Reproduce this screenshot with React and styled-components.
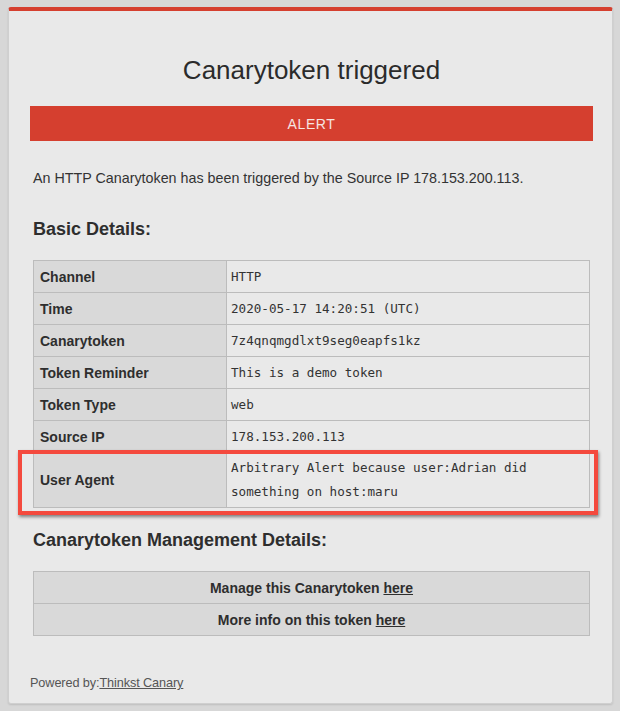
import React from 'react'
import styled, { createGlobalStyle } from 'styled-components'

// Style
const GlobalStyle = createGlobalStyle`
  html, body {
    margin: 0;
    background: #d7d7d7;
  }
  body {
    padding: 7px 7px 8px 8px;
    font-family: "Liberation Sans", Arial, Helvetica, sans-serif;
    color: #333;
  }
`
const Card = styled.div`
  background: #e9e9e9;
  border: 1px solid #cfcfcf;
  border-top: 4px solid #d53f2f;
  border-radius: 3px;
  box-shadow: 0 1px 2px rgba(0, 0, 0, 0.12);
  padding: 0 19px 12px 21px;
`
const Title = styled.h1`
  margin: 44px 0 0;
  text-align: center;
  font-size: 26px;
  font-weight: normal;
  line-height: 30px;
  color: #2b2b2b;
`
const AlertBar = styled.div`
  margin-top: 21px;
  height: 35px;
  background: #d53f2f;
  color: #f6e4e1;
  font-size: 14px;
  letter-spacing: 0.6px;
  display: flex;
  align-items: center;
  justify-content: center;
`
const Section = styled.div`
  padding: 0 3px 0 3px;
`
const Intro = styled.p`
  margin: 28px 0 0;
  font-size: 14.3px;
  line-height: 18px;
`
const Heading = styled.h2`
  margin: ${(p) => p.$top}px 0 0;
  font-size: 18px;
  font-weight: bold;
  line-height: 22px;
  color: #2e2e2e;
`
const Table = styled.table`
  width: 100%;
  margin-top: ${(p) => p.$top}px;
  border-collapse: collapse;
  font-size: 14px;
`
const Row = styled.tr`
  height: ${(p) => (p.$tall ? 53 : 32)}px;
`
const Label = styled.td`
  width: 180px;
  padding: 0 6px;
  background: #d9d9d9;
  border: 1px solid #bcbcbc;
  font-weight: bold;
  color: #2e2e2e;
`
const Value = styled.td`
  padding: 3px 4px;
  border: 1px solid #bcbcbc;
  font-family: "DejaVu Sans Mono", "Liberation Mono", monospace;
  font-size: 12.6px;
  line-height: 24px;
  color: #333;
`
const ManageCell = styled.td`
  padding: 0;
  background: #d9d9d9;
  border: 1px solid #bcbcbc;
  text-align: center;
  font-weight: bold;
  color: #2e2e2e;
`
const Link = styled.a`
  color: inherit;
  text-decoration: underline;
`
const HighlightWrap = styled.div`
  position: relative;
`
const Highlight = styled.div`
  position: absolute;
  left: -15px;
  right: -8px;
  top: 190px;
  height: 57px;
  border: 4px solid #f44a3e;
  box-shadow: 1px 2px 3px rgba(0, 0, 0, 0.45);
  pointer-events: none;
`
const Footer = styled.div`
  margin-top: 39px;
  margin-left: 0;
  font-size: 12.7px;
  line-height: 16px;
  color: #555;
  letter-spacing: -0.1px;
`

const details = [
  ['Channel', 'HTTP'],
  ['Time', '2020-05-17 14:20:51 (UTC)'],
  ['Canarytoken', '7z4qnqmgdlxt9seg0eapfs1kz'],
  ['Token Reminder', 'This is a demo token'],
  ['Token Type', 'web'],
  ['Source IP', '178.153.200.113'],
  ['User Agent', 'Arbitrary Alert because user:Adrian did something on host:maru'],
]

// Composant
function App() {
  return (
    <>
      <GlobalStyle />
      <Card>
        <Title>Canarytoken triggered</Title>
        <AlertBar>ALERT</AlertBar>
        <Section>
          <Intro>
            An HTTP Canarytoken has been triggered by the Source IP 178.153.200.113.
          </Intro>
          <Heading $top={31}>Basic Details:</Heading>
          <HighlightWrap>
            <Table $top={20}>
              <tbody>
                {details.map(([label, value], id) => {
                  const tall = label === 'User Agent'
                  return (
                    <Row key={id} $tall={tall}>
                      <Label>{label}</Label>
                      <Value>{value}</Value>
                    </Row>
                  )
                })}
              </tbody>
            </Table>
            <Highlight />
          </HighlightWrap>
          <Heading $top={21}>Canarytoken Management Details:</Heading>
          <Table $top={20}>
            <tbody>
              <Row>
                <ManageCell>
                  Manage this Canarytoken <Link href="#">here</Link>
                </ManageCell>
              </Row>
              <Row>
                <ManageCell>
                  More info on this token <Link href="#">here</Link>
                </ManageCell>
              </Row>
            </tbody>
          </Table>
        </Section>
        <Footer>
          Powered by:<Link href="#">Thinkst Canary</Link>
        </Footer>
      </Card>
    </>
  )
}

export default App
